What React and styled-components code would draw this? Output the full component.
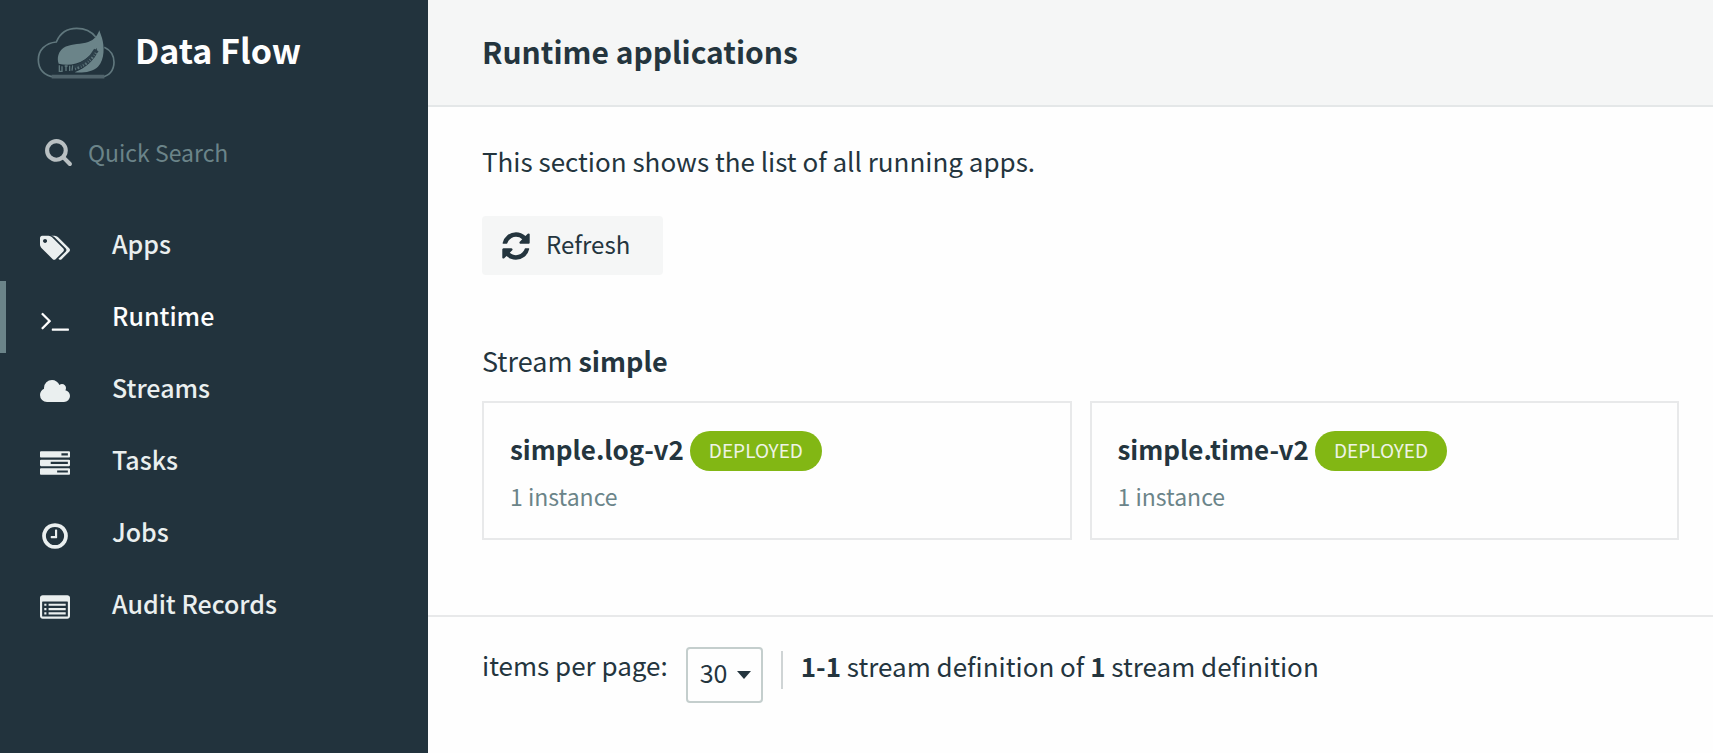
import React, { useState } from "react";
import styled, { createGlobalStyle } from "styled-components";

const color = {
  navy: "#22333d",
  ink: "#24353e",
  slate: "#6b8489",
  line: "#e8e9ea",
  panel: "#f5f6f6",
  green: "#82b714",
  white: "#fefefe",
};

const GlobalStyle = createGlobalStyle`
  *, *::before, *::after { box-sizing: border-box; }
  body {
    margin: 0;
    background: ${color.white};
    color: ${color.ink};
    font-family: "Noto Sans CJK JP", "Open Sans", sans-serif;
    font-size: 26px;
    line-height: 36px;
  }
  h1, h2, h3, p, ul { margin: 0; padding: 0; font-size: inherit; font-weight: inherit; }
  button, input, select { font: inherit; color: inherit; }
`;

const Page = styled.div`
  display: flex;
  min-height: 100vh;
`;

const Sidebar = styled.aside`
  flex: 0 0 428px;
  background: ${color.navy};
`;

const Brand = styled.a`
  display: flex;
  align-items: center;
  gap: 19px;
  height: 106px;
  padding: 0 37px;
  color: ${color.white};
  font-size: 34px;
  font-weight: 700;
  text-decoration: none;
`;

const BrandName = styled.span`
  padding-bottom: 6px;
`;

const SearchBox = styled.label`
  display: flex;
  align-items: center;
  gap: 15px;
  height: 96px;
  margin: 0 16px;
  padding: 0 26px 5px 28px;
  color: #b9c0c2;
`;

const SearchInput = styled.input`
  flex: 1;
  min-width: 0;
  padding: 0;
  border: 0;
  outline: 0;
  background: transparent;
  font-size: 23px;
  &::placeholder { color: ${color.slate}; opacity: 1; }
`;

const NavList = styled.ul`
  list-style: none;
  && { padding-top: 7px; }
`;

const NavLink = styled.a`
  display: flex;
  align-items: center;
  gap: 42px;
  height: 72px;
  padding: 0 40px 5px 34px;
  border-left: 6px solid ${(p) => (p.$active ? color.slate : "transparent")};
  color: ${(p) => (p.$active ? color.white : "#eaefef")};
  font-size: 25px;
  font-weight: 500;
  text-decoration: none;
  svg { margin-top: 11px; }
`;

const Main = styled.main`
  flex: 1;
  min-width: 0;
`;

const Header = styled.header`
  display: flex;
  align-items: center;
  height: 107px;
  padding: 0 54px 4px;
  border-bottom: 2px solid #e4e7e8;
  background: ${color.panel};
`;

const Title = styled.h1`
  && { font-size: 30px; font-weight: 700; }
`;

const Content = styled.div`
  padding: 36px 34px 75px 54px;
`;

const RefreshButton = styled.button`
  display: flex;
  align-items: center;
  gap: 14px;
  height: 59px;
  margin: 37px 0 68px;
  padding: 0 33px 4px 18px;
  border: 0;
  border-radius: 4px;
  background: ${color.panel};
  font-size: 24px;
  svg { margin-top: 4px; }
`;

const StreamTitle = styled.h2`
  && { font-size: 27px; margin-bottom: 22px; }
`;

const Cards = styled.div`
  display: grid;
  grid-template-columns: 1fr 1fr;
  gap: 18px;
`;

const Card = styled.article`
  padding: 28px 26px 24px;
  border: 2px solid ${color.line};
`;

const CardHead = styled.div`
  display: flex;
  align-items: center;
  gap: 6px;
  height: 40px;
  margin-bottom: 7px;
`;

const AppName = styled.h3`
  && { font-weight: 700; padding-bottom: 4px; }
`;

const Badge = styled.span`
  padding: 0 19px 2px;
  border-radius: 20px;
  background: ${color.green};
  color: #eef3e6;
  font-size: 19px;
  line-height: 38px;
`;

const Instances = styled.p`
  && { font-size: 23px; }
  color: ${color.slate};
`;

const Footer = styled.footer`
  display: flex;
  align-items: flex-start;
  padding: 30px 54px;
  border-top: 2px solid ${color.line};
`;

const SelectWrap = styled.span`
  display: grid;
  align-items: center;
  margin-left: 18px;
  > * { grid-area: 1 / 1; }
  svg { justify-self: end; margin-right: 12px; pointer-events: none; }
`;

const PageSelect = styled.select`
  appearance: none;
  width: 77px;
  height: 56px;
  padding: 0 0 6px 12px;
  border: 2px solid #c4cecd;
  border-radius: 4px;
  background: transparent;
  font-size: 25px;
`;

const Summary = styled.p`
  && { margin: 4px 0 0 18px; padding-left: 18px; }
  border-left: 2px solid #cfd4d5;
  height: 38px;
  line-height: 30px;
`;

const icons = {
  tags: {
    box: "128 0 1900 1792",
    d: "M576 448q0-53-37.5-90.5t-90.5-37.5-90.5 37.5-37.5 90.5 37.5 90.5 90.5 37.5 90.5-37.5 37.5-90.5zm1067 576q0 53-37 90l-491 492q-39 37-91 37-53 0-90-37l-715-716q-38-37-64.5-101t-26.5-117v-416q0-52 38-90t90-38h416q53 0 117 26.5t102 64.5l715 714q37 39 37 91zm384 0q0 53-37 90l-491 492q-39 37-91 37-36 0-59-14t-53-45l470-470q37-37 37-90 0-52-37-91l-715-714q-38-38-102-64.5t-117-26.5h224q53 0 117 26.5t102 64.5l715 714q37 39 37 91z",
  },
  terminal: {
    d: "M649 983l-466 466q-10 10-23 10t-23-10l-50-50q-10-10-10-23t10-23l393-393-393-393q-10-10-10-23t10-23l50-50q10-10 23-10t23 10l466 466q10 10 10 23t-10 23zm1079 457v64q0 14-9 23t-23 9h-960q-14 0-23-9t-9-23v-64q0-14 9-23t23-9h960q14 0 23 9t9 23z",
  },
  cloud: {
    box: "64 0 1920 1792",
    d: "M1984 1152q0 159-112.500 271.500t-271.500 112.500h-1088q-185 0-316.500-131.500t-131.500-316.500q0-132 71-241.500t187-163.500q-2-28-2-43 0-212 150-362t362-150q158 0 286.500 88t187.500 230q70-62 166-62 106 0 181 75t75 181q0 75-41 138 129 30 213 134.500t84 239.500z",
  },
  tasks: {
    d: "M1024 1408h640v-128h-640v128zm-384-512h1024v-128h-1024v128zm640-512h384v-128h-384v128zm512 832v256q0 26-19 45t-45 19h-1664q-26 0-45-19t-19-45v-256q0-26 19-45t45-19h1664q26 0 45 19t19 45zm0-512v256q0 26-19 45t-45 19h-1664q-26 0-45-19t-19-45v-256q0-26 19-45t45-19h1664q26 0 45 19t19 45zm0-512v256q0 26-19 45t-45 19h-1664q-26 0-45-19t-19-45v-256q0-26 19-45t45-19h1664q26 0 45 19t19 45z",
  },
  clock: {
    d: "M1024 544v448q0 14-9 23t-23 9h-320q-14 0-23-9t-9-23v-64q0-14 9-23t23-9h224v-352q0-14 9-23t23-9h64q14 0 23 9t9 23zm416 352q0-148-73-273t-198-198-273-73-273 73-198 198-73 273 73 273 198 198 273 73 273-73 198-198 73-273zm224 0q0 209-103 385.500t-279.500 279.500-385.500 103-385.500-103-279.500-279.500-103-385.500 103-385.500 279.500-279.500 385.500-103 385.500 103 279.500 279.500 103 385.500z",
  },
  list: {
    d: "M256 1152h128v128h-128zM256 896h128v128h-128zM256 640h128v128h-128zM512 1152h1024v128h-1024zM512 896h1024v128h-1024zM512 640h1024v128h-1024zM1664 1376v-832q0-13-9.500-22.500t-22.500-9.500h-1472q-13 0-22.500 9.500t-9.500 22.500v832q0 13 9.500 22.500t22.500 9.500h1472q13 0 22.500-9.500t9.500-22.500zm128-1088v1088q0 66-47 113t-113 47h-1472q-66 0-113-47t-47-113v-1088q0-66 47-113t113-47h1472q66 0 113 47t47 113z",
  },
  search: {
    d: "M1216 832q0-185-131.500-316.500t-316.500-131.500-316.500 131.500-131.500 316.500 131.500 316.500 316.500 131.500 316.500-131.500 131.500-316.500zm512 832q0 52-38 90t-90 38q-54 0-90-38l-343-342q-179 124-399 124-143 0-273.500-55.500t-225-150-150-225-55.500-273.500 55.500-273.500 150-225 225-150 273.500-55.500 273.500 55.500 225 150 150 225 55.500 273.500q0 220-124 399l343 343q37 37 37 90z",
  },
  refresh: {
    d: "M1639 1056q0 5-1 7-64 268-268 434.500t-478 166.500q-146 0-282.500-55t-243.500-157l-129 129q-19 19-45 19t-45-19-19-45v-448q0-26 19-45t45-19h448q26 0 45 19t19 45-19 45l-137 137q71 66 161 102t187 36q134 0 250-65t186-179q11-17 53-117 8-23 30-23h192q13 0 22.500 9.500t9.500 22.500zm25-800v448q0 26-19 45t-45 19h-448q-26 0-45-19t-19-45 19-45l138-138q-148-137-349-137-134 0-250 65t-186 179q-11 17-53 117-8 23-30 23h-199q-13 0-22.500-9.500t-9.500-22.500v-7q65-268 270-434.500t480-166.500q146 0 284 55.500t245 156.500l130-129q19-19 45-19t45 19 19 45z",
  },
};

function Icon({ name, size = 30 }) {
  const { d, box = "0 0 1792 1792" } = icons[name];
  return (
    <svg width={size} height={size} viewBox={box} fill="currentColor" fillRule="evenodd" aria-hidden="true">
      <path d={d} />
    </svg>
  );
}

function Logo() {
  return (
    <svg width="79" height="54" viewBox="20 18 237 162" fill="none" aria-hidden="true">
      <path
        d="M72 171C42 168 24 148 24 119C24 91 45 69 78 66C89 39 111 25 139 25C162 25 183 34 196 51M222 82C241 91 251 106 251 127C251 151 237 168 214 171"
        stroke="#60777d"
        strokeWidth="5"
      />
      <path d="M64 170H222" stroke="#50636b" strokeWidth="11" />
      <path
        d="M207 31C199 52 187 64 166 68C143 73 117 72 100 83C84 94 79 113 85 131C111 137 139 134 162 119C178 109 190 98 199 84C201 102 192 116 177 130C164 142 149 151 133 157C157 159 187 156 203 140C224 119 222 77 215 54C212 45 209 38 207 31Z"
        fill={color.slate}
      />
      <path d="M132 143C160 136 182 119 198 90" stroke="#2c3f49" strokeWidth="15" />
      <path d="M134 147C162 139 184 121 199 95" stroke="#5b7278" strokeWidth="8" strokeDasharray="3 5 5 6 2 5" />
      <path d="M87 136V154H95V139M103 138H112M107 138V153M118 137V153M127 136L125 152" stroke="#5f777c" strokeWidth="4" />
    </svg>
  );
}

const navItems = [
  { label: "Apps", icon: "tags" },
  { label: "Runtime", icon: "terminal", active: true },
  { label: "Streams", icon: "cloud" },
  { label: "Tasks", icon: "tasks" },
  { label: "Jobs", icon: "clock" },
  { label: "Audit Records", icon: "list" },
];

const apps = ["simple.log-v2", "simple.time-v2"];

export default function App() {
  const [pageSize, setPageSize] = useState("30");
  return (
    <>
      <GlobalStyle />
      <Page>
        <Sidebar>
          <Brand href="#">
            <Logo />
            <BrandName>Data Flow</BrandName>
          </Brand>
          <SearchBox>
            <Icon name="search" size={29} />
            <SearchInput type="text" placeholder="Quick Search" aria-label="Quick Search" />
          </SearchBox>
          <nav>
            <NavList>
              {navItems.map((item) => (
                <li key={item.label}>
                  <NavLink href="#" $active={item.active} aria-current={item.active ? "page" : undefined}>
                    <Icon name={item.icon} />
                    {item.label}
                  </NavLink>
                </li>
              ))}
            </NavList>
          </nav>
        </Sidebar>
        <Main>
          <Header>
            <Title>Runtime applications</Title>
          </Header>
          <Content>
            <p>This section shows the list of all running apps.</p>
            <RefreshButton type="button">
              <Icon name="refresh" size={32} />
              Refresh
            </RefreshButton>
            <StreamTitle>
              Stream <strong>simple</strong>
            </StreamTitle>
            <Cards>
              {apps.map((name) => (
                <Card key={name}>
                  <CardHead>
                    <AppName>{name}</AppName>
                    <Badge>DEPLOYED</Badge>
                  </CardHead>
                  <Instances>1 instance</Instances>
                </Card>
              ))}
            </Cards>
          </Content>
          <Footer>
            <label htmlFor="page-size">items per page:</label>
            <SelectWrap>
              <PageSelect id="page-size" value={pageSize} onChange={(e) => setPageSize(e.target.value)}>
                <option>30</option>
                <option>50</option>
                <option>100</option>
              </PageSelect>
              <svg width="14" height="8" viewBox="0 0 14 8" fill="currentColor" aria-hidden="true">
                <path d="M0 0H14L7 8Z" />
              </svg>
            </SelectWrap>
            <Summary>
              <strong>1-1</strong> stream definition of <strong>1</strong> stream definition
            </Summary>
          </Footer>
        </Main>
      </Page>
    </>
  );
}
